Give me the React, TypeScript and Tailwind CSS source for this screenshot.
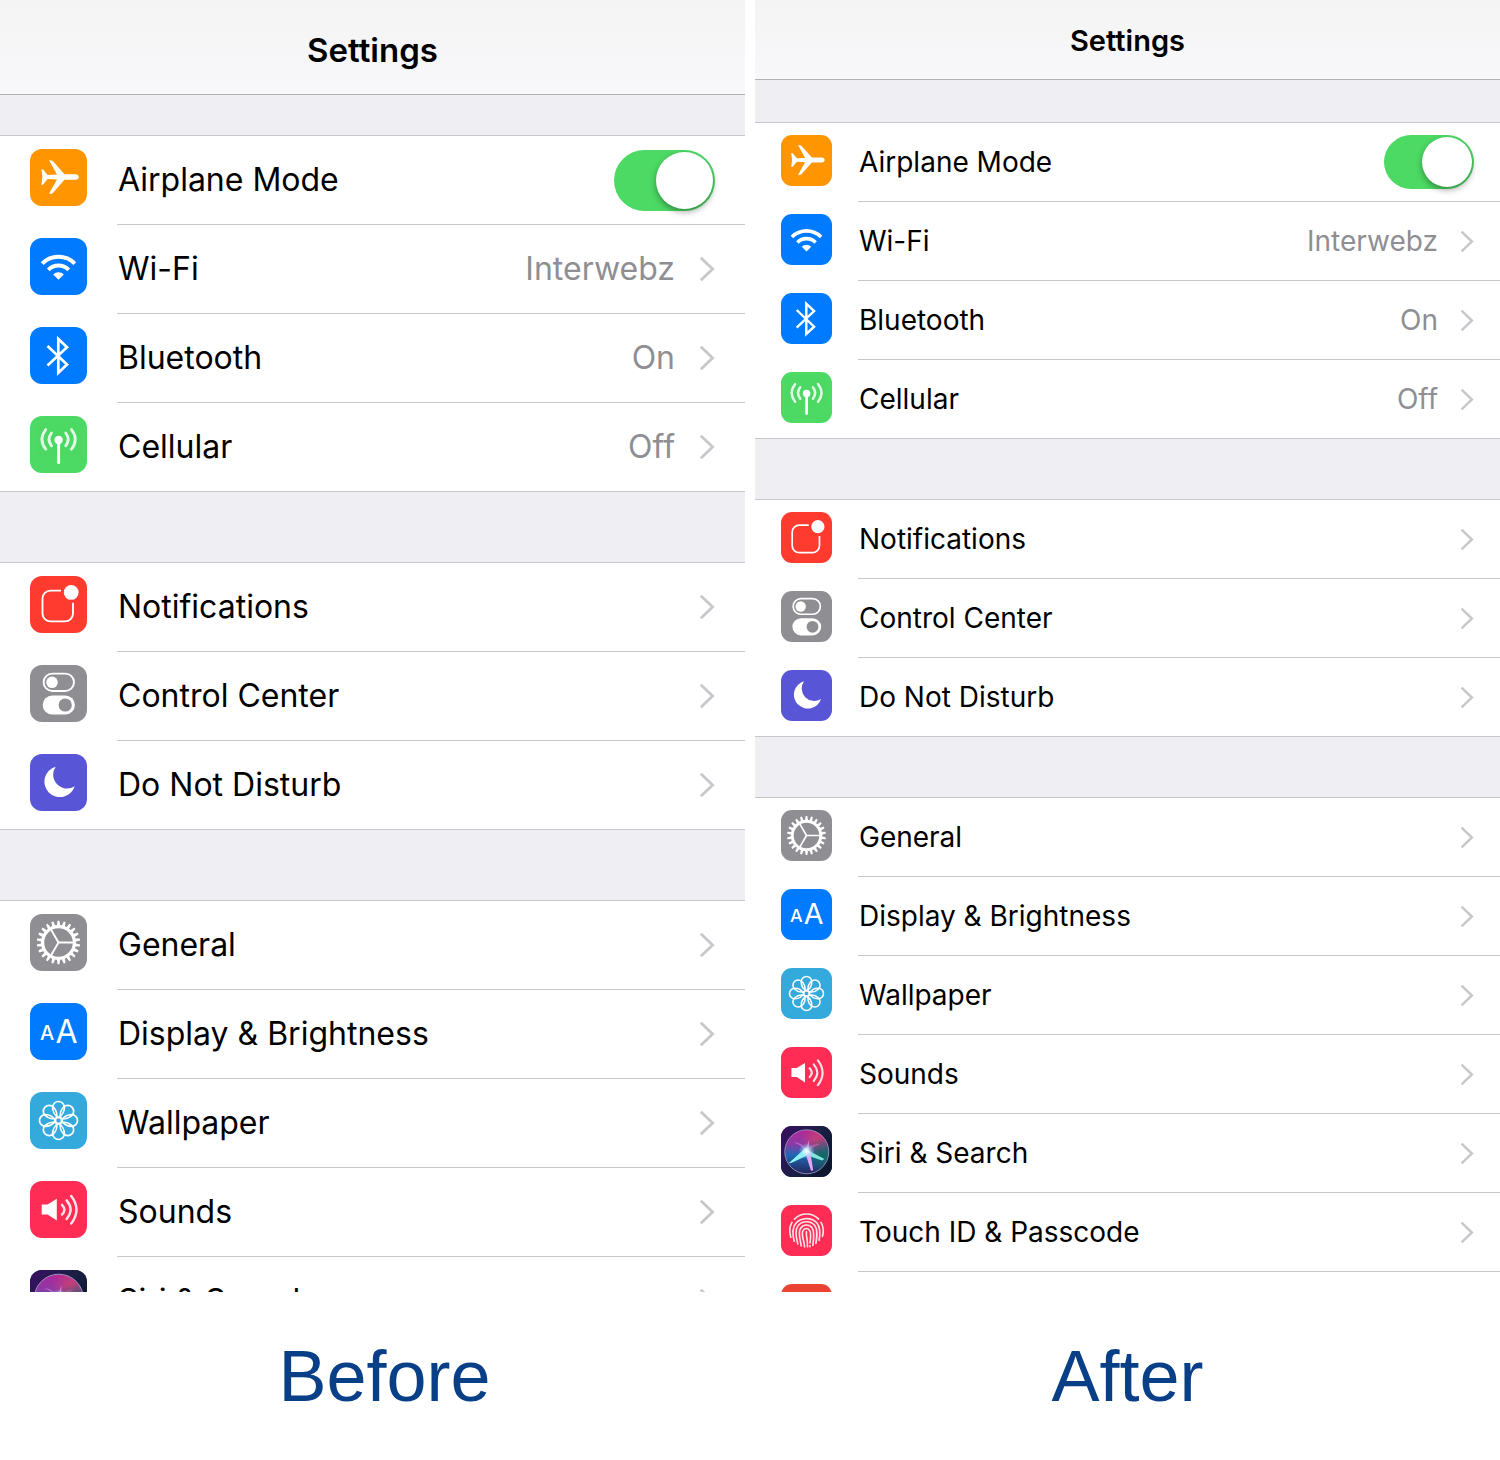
import { clsx } from 'clsx'
import { useId, useState } from 'react'
import type { ReactNode } from 'react'

type Density = 'zoomed' | 'standard'

type Item = {
  label?: string
  icon: ReactNode
  tile: string
  value?: string
  toggle?: boolean
}

const GEAR_TEETH = Array.from({ length: 22 }, (_, i) => (i * 360) / 22)
const PETALS = [0, 45, 90, 135, 180, 225, 270, 315]

const Glyph = ({ children }: { children: ReactNode }) => (
  <svg viewBox="0 0 57 57" fill="none" aria-hidden="true" className="size-full">
    {children}
  </svg>
)

const AirplaneIcon = () => (
  <Glyph>
    <path
      fill="#fff"
      d="M45.5 25.2H34.5L22.8 12Q21.8 10.9 19 11.2L27 25.6L17.6 26L13.4 20.8Q12.6 19.9 11.4 20.2L12.4 28L11.4 35.8Q12.6 36.1 13.4 35.2L17.6 30L27 30.4L19 44.8Q21.8 45.1 22.8 44L34.5 30.8H45.5Q48.8 30.4 48.8 28Q48.8 25.6 45.5 25.2Z"
    />
  </Glyph>
)

const WifiIcon = () => (
  <Glyph>
    <g stroke="#fff" strokeWidth="4">
      <path d="M12.2 25.6A23 23 0 0 1 44.8 25.6" />
      <path d="M18.3 31.8A14.4 14.4 0 0 1 38.7 31.8" />
    </g>
    <path fill="#fff" d="M28.5 41.8L23.2 36.5A7.5 7.5 0 0 1 33.8 36.5Z" />
  </Glyph>
)

const BluetoothIcon = () => (
  <Glyph>
    <path
      stroke="#fff"
      strokeWidth="2.7"
      d="M17.5 19L37 37.6L28.3 45.8V12L37 20.2L17.5 38.6"
    />
  </Glyph>
)

const CellularIcon = () => (
  <Glyph>
    <circle cx="28.6" cy="24" r="4.2" fill="#fff" />
    <path stroke="#fff" strokeWidth="3" strokeLinecap="round" d="M28.6 24V46.5" />
    <g stroke="#fff" strokeWidth="2.8" strokeLinecap="round" opacity="0.85">
      <path d="M21.5 17Q16.5 23.4 21.5 29.8" />
      <path d="M35.7 17Q40.7 23.4 35.7 29.8" />
      <path d="M15.8 13.5Q8 23.4 15.8 33.2" />
      <path d="M41.4 13.5Q49.2 23.4 41.4 33.2" />
    </g>
  </Glyph>
)

const NotificationsIcon = () => (
  <Glyph>
    <path
      stroke="#fff"
      strokeWidth="1.9"
      d="M31 14.6H20.5A8 8 0 0 0 12.5 22.6V37.4A8 8 0 0 0 20.5 45.4H35A8 8 0 0 0 43 37.4V26.8"
    />
    <circle cx="41.2" cy="16.4" r="7.4" fill="#fff" />
  </Glyph>
)

const ControlCenterIcon = () => (
  <Glyph>
    <rect
      x="13.6"
      y="8.6"
      width="30.4"
      height="17.4"
      rx="8.7"
      stroke="#fff"
      strokeWidth="1.9"
    />
    <circle cx="22" cy="17.3" r="5.8" fill="#fff" />
    <rect x="12.7" y="30.4" width="32.2" height="19.2" rx="9.6" fill="#fff" />
    <circle cx="35.2" cy="40" r="6.6" fill="#8e8e93" />
  </Glyph>
)

const MoonIcon = () => (
  <Glyph>
    <path
      fill="#fff"
      d="M25.7 12.7A15.5 15.5 0 1 0 44.7 32.3A13.9 13.9 0 0 1 25.7 12.7Z"
    />
  </Glyph>
)

const GearIcon = () => (
  <Glyph>
    <g stroke="#fff">
      <circle cx="28.5" cy="28.5" r="15.9" strokeWidth="3.2" />
      {GEAR_TEETH.map((angle) => (
        <path
          key={angle}
          fill="#fff"
          stroke="none"
          d="M26.8 12L27.5 6.8H29.5L30.2 12Z"
          transform={`rotate(${angle} 28.5 28.5)`}
        />
      ))}
      <path
        strokeWidth="1.9"
        d="M28.5 28.5H44M28.5 28.5L20.7 15M28.5 28.5L20.7 42"
      />
    </g>
  </Glyph>
)

const TextSizeIcon = () => (
  <Glyph>
    <g fill="#fff" fontFamily="Inter, sans-serif">
      <text x="10" y="37.3" fontSize="20" fontWeight="500">
        A
      </text>
      <text x="25.5" y="39.6" fontSize="32">
        A
      </text>
    </g>
  </Glyph>
)

const WallpaperIcon = () => (
  <Glyph>
    <g stroke="#fff" strokeWidth="1.7">
      {PETALS.map((angle) => (
        <path
          key={angle}
          d="M28.5 25.4C24.6 23.4 22.6 18.8 22.6 15.4A5.9 5.9 0 0 1 34.4 15.4C34.4 18.8 32.4 23.4 28.5 25.4Z"
          transform={`rotate(${angle} 28.5 28.5)`}
        />
      ))}
      <circle cx="28.5" cy="28.5" r="3.2" />
    </g>
  </Glyph>
)

const SoundsIcon = () => (
  <Glyph>
    <path fill="#fff" d="M11.7 23.4H17.6L26.8 17.8V39.6L17.6 33.6H11.7Z" />
    <g stroke="#fff" strokeWidth="2.4" strokeLinecap="round" opacity="0.88">
      <path d="M32 23.8Q36.8 28.7 32 33.6" />
      <path d="M36.6 19.4Q44.6 28.7 36.6 38" />
      <path d="M41.2 15Q51.8 28.7 41.2 42.6" />
    </g>
  </Glyph>
)

const SiriIcon = () => {
  const id = useId()
  return (
    <Glyph>
      <defs>
        <linearGradient id={`${id}bg`} x1="0" y1="0" x2="1" y2="0.6">
          <stop offset="0" stopColor="#3a0f63" />
          <stop offset="0.6" stopColor="#1a1f45" />
          <stop offset="1" stopColor="#0d1730" />
        </linearGradient>
        <linearGradient id={`${id}orb`} x1="0.5" y1="0" x2="0.5" y2="1">
          <stop offset="0" stopColor="#b0269b" />
          <stop offset="0.32" stopColor="#8b3aa6" />
          <stop offset="0.58" stopColor="#1e68b4" />
          <stop offset="1" stopColor="#23265c" />
        </linearGradient>
        <radialGradient id={`${id}red`} cx="0.75" cy="0.22" r="0.4">
          <stop offset="0" stopColor="#c93f74" />
          <stop offset="1" stopColor="#c93f74" stopOpacity="0" />
        </radialGradient>
        <radialGradient id={`${id}teal`} cx="0.88" cy="0.58" r="0.42">
          <stop offset="0" stopColor="#11685f" />
          <stop offset="1" stopColor="#11685f" stopOpacity="0" />
        </radialGradient>
        <radialGradient id={`${id}glow`}>
          <stop offset="0" stopColor="#fff" />
          <stop offset="0.35" stopColor="#d6fbff" stopOpacity="0.7" />
          <stop offset="1" stopColor="#6fd6ff" stopOpacity="0" />
        </radialGradient>
      </defs>
      <rect width="57" height="57" fill={`url(#${id}bg)`} />
      <circle cx="28.8" cy="28.8" r="24.4" fill={`url(#${id}orb)`} />
      <circle cx="28.8" cy="28.8" r="24.4" fill={`url(#${id}red)`} />
      <circle cx="28.8" cy="28.8" r="24.4" fill={`url(#${id}teal)`} />
      <path fill="#e88ae0" opacity="0.6" d="M28 28C25 21 20 18 14 18.5C20 20 24 23 28 28Z" />
      <path fill="#f19be6" opacity="0.7" d="M27 28L31.5 15L31 28Z" />
      <path fill="#d77ae0" opacity="0.4" d="M29 27C33 21 39 19 44 20C39 22 34 25 29 27Z" />
      <path fill="#8df3f0" d="M28 24L8.5 41.5L12 41L31 32Z" />
      <path fill="#7fe8d8" d="M27 25.5L48.5 37L46 38.5L27 32Z" />
      <path fill="#e6a6f2" d="M26.5 28L33.5 50L36 49.5L32.5 28Z" />
      <circle cx="28.8" cy="28" r="9" fill={`url(#${id}glow)`} />
      <circle
        cx="28.8"
        cy="28.8"
        r="24.6"
        stroke="#c3b7dd"
        strokeOpacity="0.75"
        strokeWidth="1"
      />
    </Glyph>
  )
}

const TouchIdIcon = () => (
  <Glyph>
    <g stroke="#fff" strokeWidth="1.8" strokeLinecap="round" opacity="0.88">
      <path d="M15 15.8A18.6 18.6 0 0 1 42 15.8" />
      <path d="M11 36C9.2 30.5 9.6 24 12.2 19.4" />
      <path d="M44.8 19.4C47.4 24 47.6 30.5 46.4 35" />
      <path d="M14.8 40.5C12.8 33 12.2 26 16.4 20.8C22 13.6 34.4 13.4 40.2 20.2C44.2 25.2 43.8 33 42.6 39.6" />
      <path d="M18.8 43.6C17 35.5 15.2 28.4 18.8 23.6C23.2 17.2 33.4 17 37.8 23C41.4 28 40.2 35.5 39 43" />
      <path d="M22.6 45.8C21.4 37 18.6 31 21.8 26.2C25 21.2 32 21.2 35 26C37.8 30.6 36.4 38 35.6 45.2" />
      <path d="M26.4 47C25.8 39 22 32.6 24.6 28.6C26.6 25.4 30.6 25.6 32.2 28.8C34 32.6 32.8 38.6 32.4 42.4" />
      <path d="M28.4 30C28 35 30 40 29.6 46.8M32.4 45.6V46.6" />
    </g>
  </Glyph>
)

const GROUPS: Item[][] = [
  [
    { label: 'Airplane Mode', icon: <AirplaneIcon />, tile: 'bg-[#ff9500]', toggle: true },
    { label: 'Wi-Fi', icon: <WifiIcon />, tile: 'bg-[#007aff]', value: 'Interwebz' },
    { label: 'Bluetooth', icon: <BluetoothIcon />, tile: 'bg-[#007aff]', value: 'On' },
    { label: 'Cellular', icon: <CellularIcon />, tile: 'bg-[#4cd964]', value: 'Off' }
  ],
  [
    { label: 'Notifications', icon: <NotificationsIcon />, tile: 'bg-[#ff3b30]' },
    { label: 'Control Center', icon: <ControlCenterIcon />, tile: 'bg-[#8e8e93]' },
    { label: 'Do Not Disturb', icon: <MoonIcon />, tile: 'bg-[#5856d6]' }
  ]
]

const GENERAL: Item[] = [
  { label: 'General', icon: <GearIcon />, tile: 'bg-[#8e8e93]' },
  { label: 'Display & Brightness', icon: <TextSizeIcon />, tile: 'bg-[#007aff]' },
  { label: 'Wallpaper', icon: <WallpaperIcon />, tile: 'bg-[#34aadc]' },
  { label: 'Sounds', icon: <SoundsIcon />, tile: 'bg-[#ff2d55]' }
]

const SIRI: Item = { label: 'Siri & Search', icon: <SiriIcon />, tile: 'bg-[#1a1f45]' }
const TOUCH_ID: Item = {
  label: 'Touch ID & Passcode',
  icon: <TouchIdIcon />,
  tile: 'bg-[#ff2d55]'
}
const SOS: Item = { icon: null, tile: 'bg-[#eb4333]' }

const styles = {
  zoomed: {
    header: 'h-[95px] pt-2 text-[33px]',
    firstGap: 'h-10',
    gap: 'h-[70px]',
    row: 'h-[89px] gap-[30px] pl-[30px]',
    tile: 'mt-[13px] size-[57px] rounded-[12px]',
    text: 'text-[32px]',
    content: 'pl-px pr-[30px]',
    value: 'mr-6',
    chevron: 'h-[26px] w-[16px]',
    peek: 'h-[35px]',
    toggle:
      'h-[61px] w-[101px] before:size-[57px] before:translate-x-[41px]'
  },
  standard: {
    header: 'h-20 pt-[3px] text-[29px]',
    firstGap: 'h-[42px]',
    gap: 'h-[60px]',
    row: 'h-[79px] gap-[26px] pl-[26px]',
    tile: 'mt-3 size-[51px] rounded-[11px]',
    text: 'text-[28px]',
    content: 'pl-px pr-[26px]',
    value: 'mr-[22px]',
    chevron: 'h-[23px] w-[14px]',
    peek: 'h-5',
    toggle:
      'h-[54px] w-[90px] before:size-[50px] before:translate-x-[37px]'
  }
}

const Chevron = ({ className }: { className: string }) => (
  <svg viewBox="0 0 16 26" fill="none" aria-hidden="true" className={className}>
    <path d="M1.8 1.8L13.6 13L1.8 24.2" stroke="#c7c7cc" strokeWidth="2.8" />
  </svg>
)

const Row = ({
  item,
  density,
  className
}: {
  item: Item
  density: Density
  className?: string
}) => {
  const id = useId()
  const [checked, setChecked] = useState(true)
  const s = styles[density]

  const rowClass = clsx(
    'flex w-full items-start border-[#c8c7cc] text-left group-last:border-b',
    s.row
  )
  const contentClass = clsx(
    'flex h-full min-w-0 flex-1 items-center border-b border-[#c8c7cc] group-last:border-b-0',
    s.content
  )
  const tile = (
    <span className={clsx('shrink-0 overflow-hidden', s.tile, item.tile)}>
      {item.icon}
    </span>
  )

  return (
    <li className={clsx('group', className)}>
      {item.toggle ? (
        <div className={rowClass}>
          {tile}
          <div className={contentClass}>
            <label htmlFor={id} className="flex-1 truncate">
              {item.label}
            </label>
            <input
              id={id}
              type="checkbox"
              role="switch"
              checked={checked}
              onChange={(e) => setChecked(e.target.checked)}
              className={clsx(
                'flex shrink-0 appearance-none items-center rounded-full bg-[#e5e5ea] px-[1px] before:rounded-full before:bg-white before:shadow-[0_3px_6px_rgba(0,0,0,0.35)] checked:bg-[#4cd964]',
                s.toggle,
                !checked && 'before:translate-x-[2px]'
              )}
            />
          </div>
        </div>
      ) : (
        <button type="button" aria-label={item.label ?? 'More'} className={rowClass}>
          {tile}
          <span className={contentClass}>
            <span className="flex-1 truncate">{item.label}</span>
            {item.value && (
              <span className={clsx('text-[#8e8e93]', s.value)}>{item.value}</span>
            )}
            <Chevron className={clsx('shrink-0', s.chevron)} />
          </span>
        </button>
      )}
    </li>
  )
}

const Screen = ({
  density,
  general,
  next
}: {
  density: Density
  general: Item[]
  next: Item
}) => {
  const s = styles[density]

  return (
    <section className={clsx('bg-[#efeff3] text-black', s.text)}>
      <header
        className={clsx(
          'flex items-center justify-center border-b border-[#b2b2b6] bg-linear-to-b from-[#f4f4f4] to-[#f8f8fb]',
          s.header
        )}
      >
        <h1 className="font-semibold">Settings</h1>
      </header>
      {GROUPS.map((items, i) => (
        <div key={i}>
          <div className={i === 0 ? s.firstGap : s.gap} />
          <ul className="border-t border-[#c8c7cc] bg-white">
            {items.map((item) => (
              <Row key={item.label} item={item} density={density} />
            ))}
          </ul>
        </div>
      ))}
      <div className={s.gap} />
      <ul className="border-t border-[#c8c7cc] bg-white">
        {general.map((item) => (
          <Row key={item.label} item={item} density={density} />
        ))}
        {/* scrolled off the bottom edge */}
        <Row item={next} density={density} className={clsx('overflow-hidden', s.peek)} />
      </ul>
    </section>
  )
}

const Caption = ({ children, className }: { children: ReactNode; className?: string }) => (
  <h2
    className={clsx(
      "text-center font-['Liberation_Sans',Arial,sans-serif] text-[72px] leading-[80px] text-[#083f86]",
      className
    )}
  >
    {children}
  </h2>
)

const App = () => (
  <main className="grid grid-cols-2 gap-x-[10px] gap-y-11 bg-white pb-11 font-[Inter,sans-serif]">
    <Screen density="zoomed" general={GENERAL} next={SIRI} />
    <Screen density="standard" general={[...GENERAL, SIRI, TOUCH_ID]} next={SOS} />
    <Caption className="pl-6">Before</Caption>
    <Caption>After</Caption>
  </main>
)

export default App
